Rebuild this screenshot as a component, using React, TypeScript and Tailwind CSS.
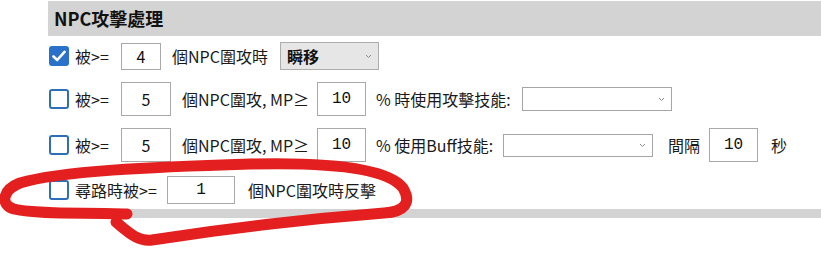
import React from 'react';

const font = { fontFamily: '"Noto Sans CJK TC", "Noto Sans", sans-serif' };

const Check = ({ checked }: { checked?: boolean }) =>
	checked ? (
		<span className="ml-px flex h-[20px] w-[20px] items-center justify-center rounded-[3px] bg-[#2a71c9]">
			<svg width="14" height="12" viewBox="0 0 14 12">
				<path d="M1.5 6.5 L5.2 10 L12.5 1.8" fill="none" stroke="white" strokeWidth="2.6" strokeLinecap="round" strokeLinejoin="round" />
			</svg>
		</span>
	) : (
		<span className="ml-px h-[20px] w-[20px] rounded-[3px] border-2 border-[#2f6fb8] bg-white" />
	);

const Box = ({ value, className, mono }: { value: string; className: string; mono?: boolean }) => (
	<span
		className={`flex items-center justify-center border border-[#a9a9a9] bg-white text-[16px] text-[#111] ${className}`}
		style={mono ? { fontFamily: '"Liberation Mono", monospace' } : undefined}>
		{value}
	</span>
);

const Chevron = () => (
	<svg width="7" height="5" viewBox="0 0 7 5" className="mr-[6px]">
		<path d="M1 1 L3.5 3.5 L6 1" fill="none" stroke="#8a8a8a" strokeWidth="1" />
	</svg>
);

const Select = ({ label, className }: { label?: string; className: string }) => (
	<span className={`flex items-center justify-between border ${className}`}>
		<span className="pl-[6px] text-[16px] font-bold text-[#111]">{label}</span>
		<Chevron />
	</span>
);

export default function App() {
	return (
		<div className="relative h-[253px] w-[821px] overflow-hidden bg-white text-[16px] text-[#1a1a1a]" style={font}>
			<div className="ml-[48px] pt-px">
				<div className="flex h-[35px] items-center bg-[#d3d3d3] pl-[6px] text-[18px] font-bold text-[#111]">
					NPC攻擊處理
				</div>

				<div className="mt-[6px] flex h-[28px] items-center">
					<Check checked />
					<span className="ml-[6px] w-[46px]">被&gt;=</span>
					<Box value="4" className="h-[27px] w-[40px]" />
					<span className="ml-[11px] w-[96px]">個NPC圍攻時</span>
					<Select label="瞬移" className="ml-[12px] h-[28px] w-[99px] border-[#adadad] bg-[#e6e6e6]" />
				</div>

				<div className="mt-[12px] flex h-[34px] items-center">
					<Check />
					<span className="ml-[6px] w-[46px]">被&gt;=</span>
					<Box value="5" className="h-[34px] w-[50px]" />
					<span className="ml-[11px] w-[135px]">個NPC圍攻, MP≥</span>
					<Box value="10" mono className="h-[34px] w-[49px]" />
					<span className="ml-[10px] w-[146px]">% 時使用攻擊技能:</span>
					<Select className="h-[24px] w-[150px] border-[#a5a5a5] bg-white" />
				</div>

				<div className="mt-[12px] flex h-[34px] items-center">
					<Check />
					<span className="ml-[6px] w-[46px]">被&gt;=</span>
					<Box value="5" className="h-[34px] w-[50px]" />
					<span className="ml-[11px] w-[135px]">個NPC圍攻, MP≥</span>
					<Box value="10" mono className="h-[34px] w-[49px]" />
					<span className="ml-[10px] w-[127px]">% 使用Buff技能:</span>
					<Select className="h-[23px] w-[150px] border-[#a5a5a5] bg-white" />
					<span className="ml-[15px] w-[41px]">間隔</span>
					<Box value="10" mono className="h-[34px] w-[49px]" />
					<span className="ml-[13px]">秒</span>
				</div>

				<div className="mt-[14px] flex h-[28px] items-center">
					<Check />
					<span className="ml-[6px] w-[92px]">尋路時被&gt;=</span>
					<Box value="1" mono className="h-[28px] w-[68px]" />
					<span className="ml-[13px]">個NPC圍攻時反擊</span>
				</div>

				<div className="mt-[5px] h-[9px] bg-[#d3d3d3]" />
			</div>

			<svg className="pointer-events-none absolute left-0 top-0" width="821" height="253" viewBox="0 0 821 253">
				<path
					d="M127 214 C 90 212, 40 215, 14 209 C 0 205, 2 190, 20 183 C 60 171, 150 167, 250 164 C 330 162, 388 168, 403 188 C 412 203, 404 212, 384 213 C 320 218, 230 228, 152 240 C 138 242, 128 232, 116 222"
					fill="none"
					stroke="#e3201f"
					strokeWidth="11"
					strokeLinecap="round"
					strokeLinejoin="round"
				/>
			</svg>
		</div>
	);
}
